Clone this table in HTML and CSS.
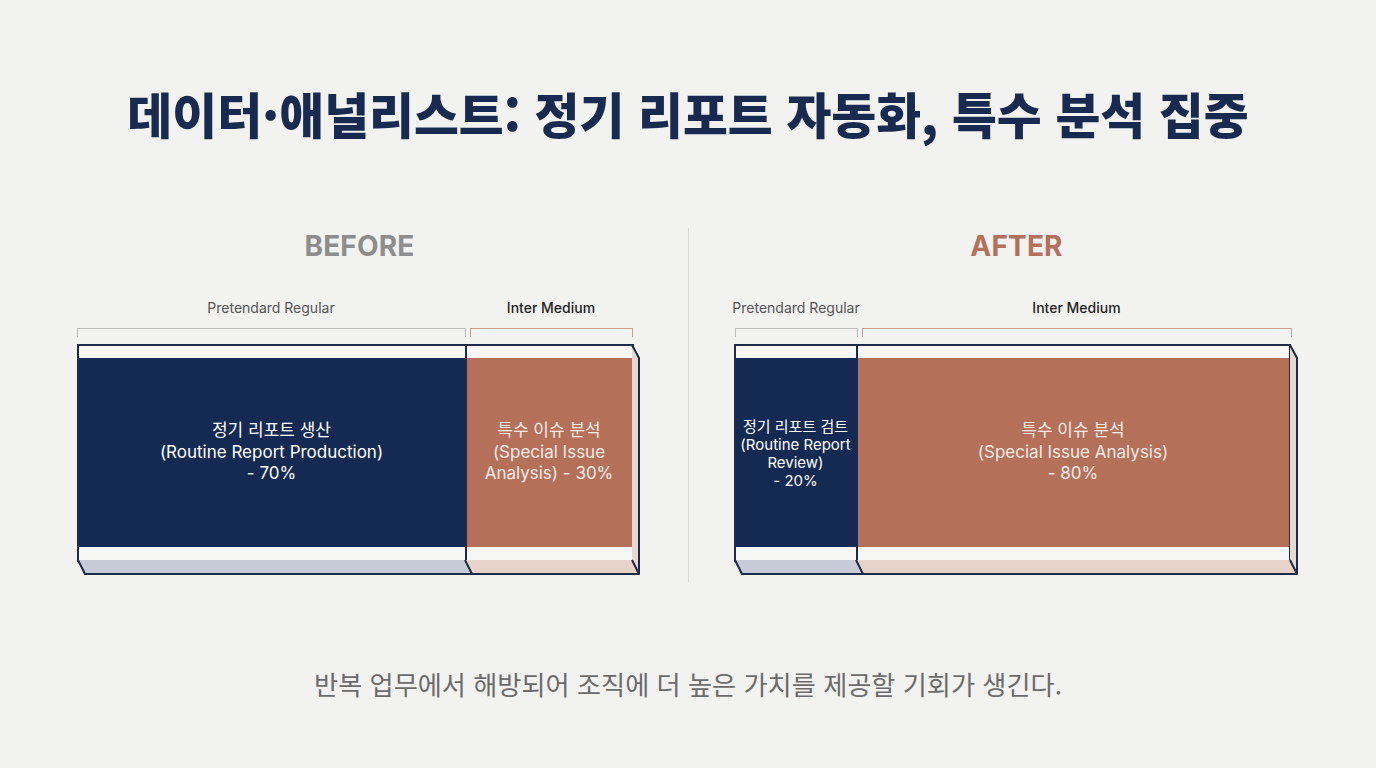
FILE: index.html
```html
<!DOCTYPE html>
<html lang="ko">
<head>
<meta charset="utf-8">
<title>데이터·애널리스트</title>
<link rel="stylesheet" href="styles.css">
</head>
<body>
<main class="page">
  <h1 class="title">데이터·애널리스트: 정기 리포트 자동화, 특수 분석 집중</h1>
  <section class="compare">
    <div class="panel">
      <h2 class="phase phase-before">BEFORE</h2>
      <div class="legend">
        <div class="legend-col b-left">
          <span class="legend-label">Pretendard Regular</span>
          <span class="bracket bracket-gray"></span>
        </div>
        <div class="legend-col b-right">
          <span class="legend-label legend-strong">Inter Medium</span>
          <span class="bracket bracket-salmon"></span>
        </div>
      </div>
      <div class="bar">
        <div class="front">
          <div class="seg seg-b-left"><div class="fill navy"><p>정기 리포트 생산<br>(Routine Report Production)<br>- 70%</p></div></div>
          <div class="seg seg-b-right"><div class="fill salmon"><p>특수 이슈 분석<br>(Special Issue Analysis) - 30%</p></div></div>
        </div>
        <svg class="extrude" width="566" height="233" viewBox="0 0 566 233">
          <polygon points="1,216 388,216 395,230 8,230" fill="#c5cbd7"/>
          <polygon points="388,216 555,216 562,230 395,230" fill="#e8d3ca"/>
          <polygon points="555,1 562,14 562,230 555,216" fill="#e5d9d6"/>
          <path d="M1,216 L8,230 L562,230 L555,216 M562,230 L562,14 L555,1 M388,216 L395,230" fill="none" stroke="#1d2a45" stroke-width="2" stroke-linejoin="round"/>
        </svg>
      </div>
    </div>
    <div class="divider"></div>
    <div class="panel">
      <h2 class="phase phase-after">AFTER</h2>
      <div class="legend">
        <div class="legend-col a-left">
          <span class="legend-label">Pretendard Regular</span>
          <span class="bracket bracket-gray"></span>
        </div>
        <div class="legend-col a-right">
          <span class="legend-label legend-strong">Inter Medium</span>
          <span class="bracket bracket-salmon"></span>
        </div>
      </div>
      <div class="bar">
        <div class="front">
          <div class="seg seg-a-left"><div class="fill navy small"><p>정기 리포트 검트<br>(Routine Report Review)<br>- 20%</p></div></div>
          <div class="seg seg-a-right"><div class="fill salmon"><p>특수 이슈 분석<br>(Special Issue Analysis)<br>- 80%</p></div></div>
        </div>
        <svg class="extrude" width="566" height="233" viewBox="0 0 566 233">
          <polygon points="1,216 122,216 129,230 8,230" fill="#c5cbd7"/>
          <polygon points="122,216 556,216 563,230 129,230" fill="#e8d3ca"/>
          <polygon points="556,1 563,14 563,230 556,216" fill="#e5d9d6"/>
          <path d="M1,216 L8,230 L563,230 L556,216 M563,230 L563,14 L556,1 M122,216 L129,230" fill="none" stroke="#1d2a45" stroke-width="2" stroke-linejoin="round"/>
        </svg>
      </div>
    </div>
  </section>
  <p class="summary">반복 업무에서 해방되어 조직에 더 높은 가치를 제공할 기회가 생긴다.</p>
</main>
</body>
</html>
```

FILE: styles.css
```css
* { box-sizing: border-box; }
html, body { margin: 0; padding: 0; }
body {
  background: #f2f2f0;
  font-family: Inter, "Noto Sans CJK KR", sans-serif;
  width: 1376px;
  height: 768px;
  overflow: hidden;
}
.page {
  display: flex;
  flex-direction: column;
  align-items: center;
  padding-top: 81px;
}
.title {
  margin: 0;
  font-family: "Noto Sans CJK KR", sans-serif;
  font-weight: 900;
  font-size: 48.8px;
  line-height: 64px;
  letter-spacing: 0;
  color: #182a4f;
  white-space: nowrap;
}
.compare {
  display: flex;
  align-items: stretch;
  margin-top: 83px;
}
.panel {
  width: 566px;
  display: flex;
  flex-direction: column;
  padding-bottom: 5px;
}
.divider {
  width: 1px;
  background: #d9d9d7;
  margin: 0 45px 0 45px;
}
.phase {
  margin: 0;
  text-align: center;
  font-size: 28px;
  line-height: 36px;
  font-weight: 700;
  letter-spacing: 0.2px;
}
.phase-before { color: #8d8d8d; }
.phase-after { color: #b4705b; }
.legend {
  display: flex;
  margin-top: 35px;
  gap: 4px;
}
.legend-col {
  display: flex;
  flex-direction: column;
  align-items: center;
}
.b-left { width: 389px; }
.b-right { width: 163px; }
.a-left { width: 123px; margin-left: 1px; }
.a-right { width: 430px; }
.legend-label {
  font-size: 14px;
  line-height: 18px;
  color: #555555;
  white-space: nowrap;
}
.legend-strong { color: #1f1f1f; font-weight: 500; }
.bracket {
  margin-top: 11px;
  width: 100%;
  height: 9px;
  border: 1.5px solid #bdbdbd;
  border-bottom: none;
}
.bracket-salmon { border-color: #c9a294; }
.bar {
  position: relative;
  margin-top: 7px;
  width: 566px;
  height: 233px;
}
.front {
  display: flex;
  width: 557px;
  height: 218px;
  border: 2px solid #1d2a45;
  background: #f6f6f4;
}
.seg {
  padding: 12px 0 13px;
  display: flex;
}
.seg + .seg { border-left: 2px solid #1d2a45; }
.seg-b-left { width: 386px; }
.seg-b-right { flex: 1; }
.seg-a-left { width: 120px; }
.seg-a-right { flex: 1; }
.fill {
  flex: 1;
  display: flex;
  align-items: center;
  justify-content: center;
  text-align: center;
  color: #ffffff;
}
.fill p {
  margin: 0;
  font-size: 17px;
  line-height: 21.5px;
  padding: 0 14px;
}
.fill.small p {
  font-size: 15px;
  line-height: 18px;
  padding: 2px 2px 0;
}
.navy { background: #152a53; }
.salmon { background: #b5705a; color: #f7ebe6; }
.extrude {
  position: absolute;
  left: 0;
  top: 0;
  pointer-events: none;
}
.summary {
  margin: 85px 0 0;
  font-family: "Noto Sans CJK KR", sans-serif;
  font-size: 26.2px;
  line-height: 34px;
  color: #6b6b6b;
  letter-spacing: 0;
  white-space: nowrap;
}
```
